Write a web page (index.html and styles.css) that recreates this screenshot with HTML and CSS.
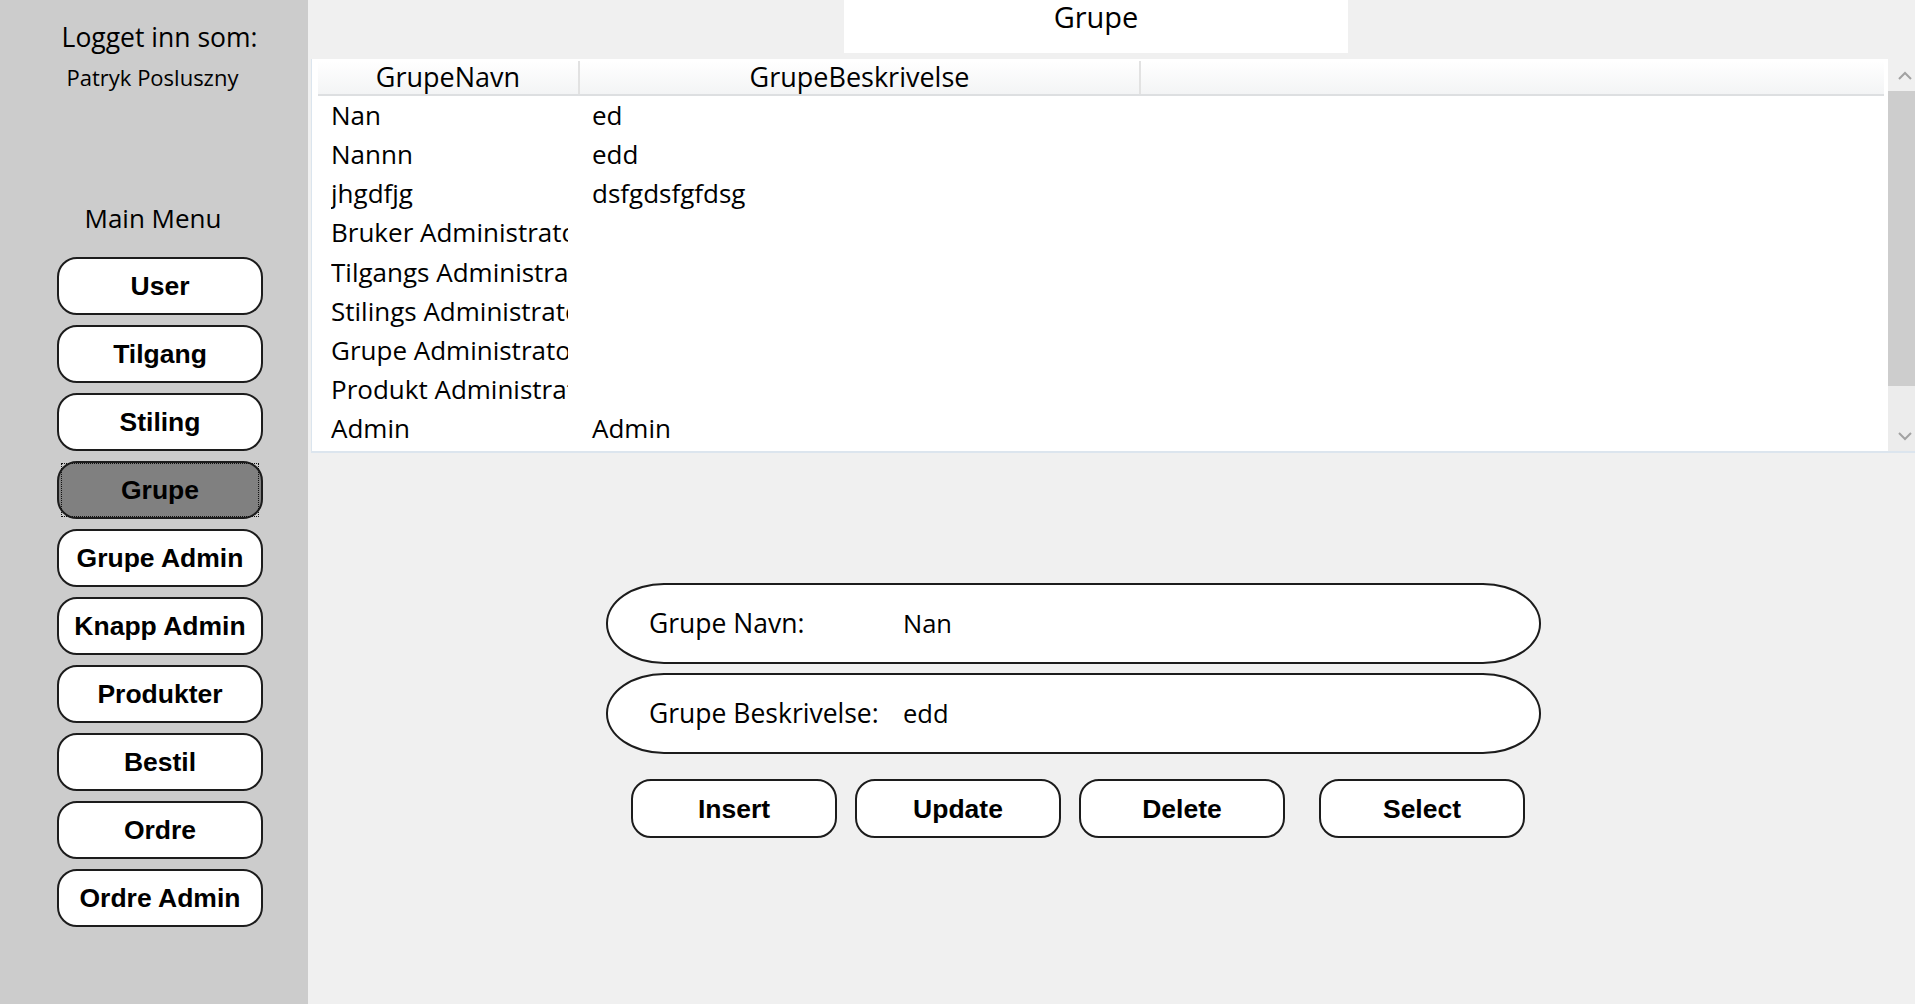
FILE: index.html
```html
<!DOCTYPE html>
<html lang="no">
<head>
<meta charset="utf-8">
<title>Grupe</title>
<link rel="stylesheet" href="styles.css">
</head>
<body>
<div class="app">
  <aside class="sidebar">
    <div class="login-label">Logget inn som:</div>
    <div class="login-name">Patryk Posluszny</div>
    <div class="menu-title">Main Menu</div>
    <nav class="menu">
      <button class="btn">User</button>
      <button class="btn">Tilgang</button>
      <button class="btn">Stiling</button>
      <button class="btn active">Grupe</button>
      <button class="btn">Grupe Admin</button>
      <button class="btn">Knapp Admin</button>
      <button class="btn">Produkter</button>
      <button class="btn">Bestil</button>
      <button class="btn">Ordre</button>
      <button class="btn">Ordre Admin</button>
    </nav>
  </aside>

  <main class="main">
    <div class="title">Grupe</div>

    <div class="grid">
      <div class="grid-body">
        <div class="grid-header">
          <div class="hcell">GrupeNavn</div>
          <div class="hcell">GrupeBeskrivelse</div>
          <div class="hcell last"></div>
        </div>
        <div class="grid-row"><div class="cell"><div class="clip">Nan</div></div><div class="cell c2">ed</div></div>
        <div class="grid-row"><div class="cell"><div class="clip">Nannn</div></div><div class="cell c2">edd</div></div>
        <div class="grid-row"><div class="cell"><div class="clip">jhgdfjg</div></div><div class="cell c2">dsfgdsfgfdsg</div></div>
        <div class="grid-row"><div class="cell"><div class="clip">Bruker Administrator</div></div><div class="cell c2"></div></div>
        <div class="grid-row"><div class="cell"><div class="clip">Tilgangs Administrator</div></div><div class="cell c2"></div></div>
        <div class="grid-row"><div class="cell"><div class="clip">Stilings Administrator</div></div><div class="cell c2"></div></div>
        <div class="grid-row"><div class="cell"><div class="clip">Grupe Administrator</div></div><div class="cell c2"></div></div>
        <div class="grid-row"><div class="cell"><div class="clip">Produkt Administrator</div></div><div class="cell c2"></div></div>
        <div class="grid-row"><div class="cell"><div class="clip">Admin</div></div><div class="cell c2">Admin</div></div>
      </div>
      <div class="scrollbar">
        <div class="sb-arrow">
          <svg width="14" height="9" viewBox="0 0 14 9"><path d="M1 8 L7 2 L13 8" fill="none" stroke="#a2a2a2" stroke-width="2"/></svg>
        </div>
        <div class="sb-thumb"></div>
        <div class="sb-track"></div>
        <div class="sb-arrow">
          <svg width="14" height="9" viewBox="0 0 14 9"><path d="M1 1 L7 7 L13 1" fill="none" stroke="#a2a2a2" stroke-width="2"/></svg>
        </div>
      </div>
    </div>

    <section class="form">
      <div class="field">
        <span class="field-label">Grupe Navn:</span>
        <span class="field-value">Nan</span>
      </div>
      <div class="field">
        <span class="field-label">Grupe Beskrivelse:</span>
        <span class="field-value">edd</span>
      </div>
      <div class="actions">
        <button class="btn action">Insert</button>
        <button class="btn action">Update</button>
        <button class="btn action">Delete</button>
        <button class="btn action select">Select</button>
      </div>
    </section>
  </main>
</div>
</body>
</html>
```

FILE: styles.css
```css
* { box-sizing: border-box; }

html, body {
  margin: 0;
  padding: 0;
  width: 1915px;
  height: 1004px;
  overflow: hidden;
  background: #f0f0f0;
  color: #000;
  font-family: "Open Sans", "Noto Sans", sans-serif;
}

.app {
  display: flex;
  width: 1915px;
  height: 1004px;
}

/* ---------- Sidebar ---------- */
.sidebar {
  width: 308px;
  flex: none;
  background: #cccccc;
  display: flex;
  flex-direction: column;
}

.login-label {
  margin-top: 21px;
  padding-left: 11px;
  font-size: 26.5px;
  line-height: 32px;
  text-align: center;
  white-space: nowrap;
}

.login-name {
  margin-top: 11px;
  padding-right: 3px;
  font-size: 22px;
  line-height: 26px;
  text-align: center;
  white-space: nowrap;
}

.menu-title {
  margin-top: 112px;
  padding-right: 2px;
  font-size: 26px;
  line-height: 32px;
  text-align: center;
}

.menu {
  margin-top: 23px;
  margin-left: 57px;
  display: flex;
  flex-direction: column;
  gap: 10px;
}

.btn {
  position: relative;
  width: 206px;
  height: 58px;
  padding: 0;
  border: 2px solid #1c1c1c;
  border-radius: 20px;
  background: #ffffff;
  color: #000;
  font-family: "Liberation Sans", Arial, sans-serif;
  font-weight: bold;
  font-size: 26.5px;
  line-height: 30px;
  text-align: center;
  cursor: pointer;
}

.btn.active {
  background: #808080;
}

.btn.active::after {
  content: "";
  position: absolute;
  top: 0;
  bottom: 0;
  left: 2px;
  right: 2px;
  border: 1px dotted #111;
}

/* ---------- Main ---------- */
.main {
  flex: 1;
  background: #f0f0f0;
  display: flex;
  flex-direction: column;
}

.title {
  margin-left: 536px;
  width: 504px;
  height: 53px;
  background: #ffffff;
  font-size: 29px;
  line-height: 34px;
  text-align: center;
}

/* Data grid */
.grid {
  margin-top: 6px;
  margin-left: 3px;
  height: 394px;
  display: flex;
  border-left: 1px solid #dbe5ee;
  border-bottom: 2px solid #dce5ee;
}

.grid-body {
  flex: 1;
  background: #ffffff;
  padding-top: 2px;
}

.grid-header {
  display: grid;
  grid-template-columns: 262px 561px 1fr;
  margin-left: 6px;
  margin-right: 4px;
  height: 35px;
  background: linear-gradient(#ffffff, #f3f4f5);
  border-bottom: 2px solid #dddfe1;
}

.hcell {
  font-size: 27px;
  line-height: 31px;
  text-align: center;
  white-space: nowrap;
  border-right: 2px solid #e2e2e2;
}

.hcell.last { border-right: none; }

.grid-row {
  display: grid;
  grid-template-columns: 262px 561px 1fr;
  margin-left: 6px;
  height: 39.15px;
  font-size: 26px;
  line-height: 39px;
  white-space: nowrap;
}

.cell { padding-left: 13px; }

.cell .clip {
  margin-right: 12px;
  overflow: hidden;
}

.cell.c2 { padding-left: 12px; }

/* Scrollbar */
.scrollbar {
  width: 27px;
  flex: none;
  background: #f0f0f0;
  display: flex;
  flex-direction: column;
}

.sb-arrow {
  height: 32px;
  display: flex;
  align-items: center;
  padding-left: 10px;
}

.sb-thumb {
  height: 295px;
  background: #cdcdcd;
}

.sb-track {
  flex: 1;
  background: #ececec;
}

.scrollbar .sb-arrow:last-child {
  height: 30px;
  background: #ececec;
}

/* Form */
.form {
  margin-top: 130px;
  margin-left: 298px;
  display: flex;
  flex-direction: column;
}

.field {
  width: 935px;
  height: 81px;
  border: 2px solid #1c1c1c;
  border-radius: 58px / 40px;
  background: #ffffff;
  display: flex;
  align-items: center;
  padding-left: 41px;
  padding-bottom: 2px;
}

.field + .field { margin-top: 9px; }

.field-label {
  width: 254px;
  font-size: 26.5px;
  white-space: nowrap;
}

.field-value {
  font-size: 25.5px;
}

.actions {
  margin-top: 25px;
  margin-left: 25px;
  display: flex;
  gap: 18px;
}

.btn.action { height: 59px; }

.btn.select { margin-left: 16px; }
```
